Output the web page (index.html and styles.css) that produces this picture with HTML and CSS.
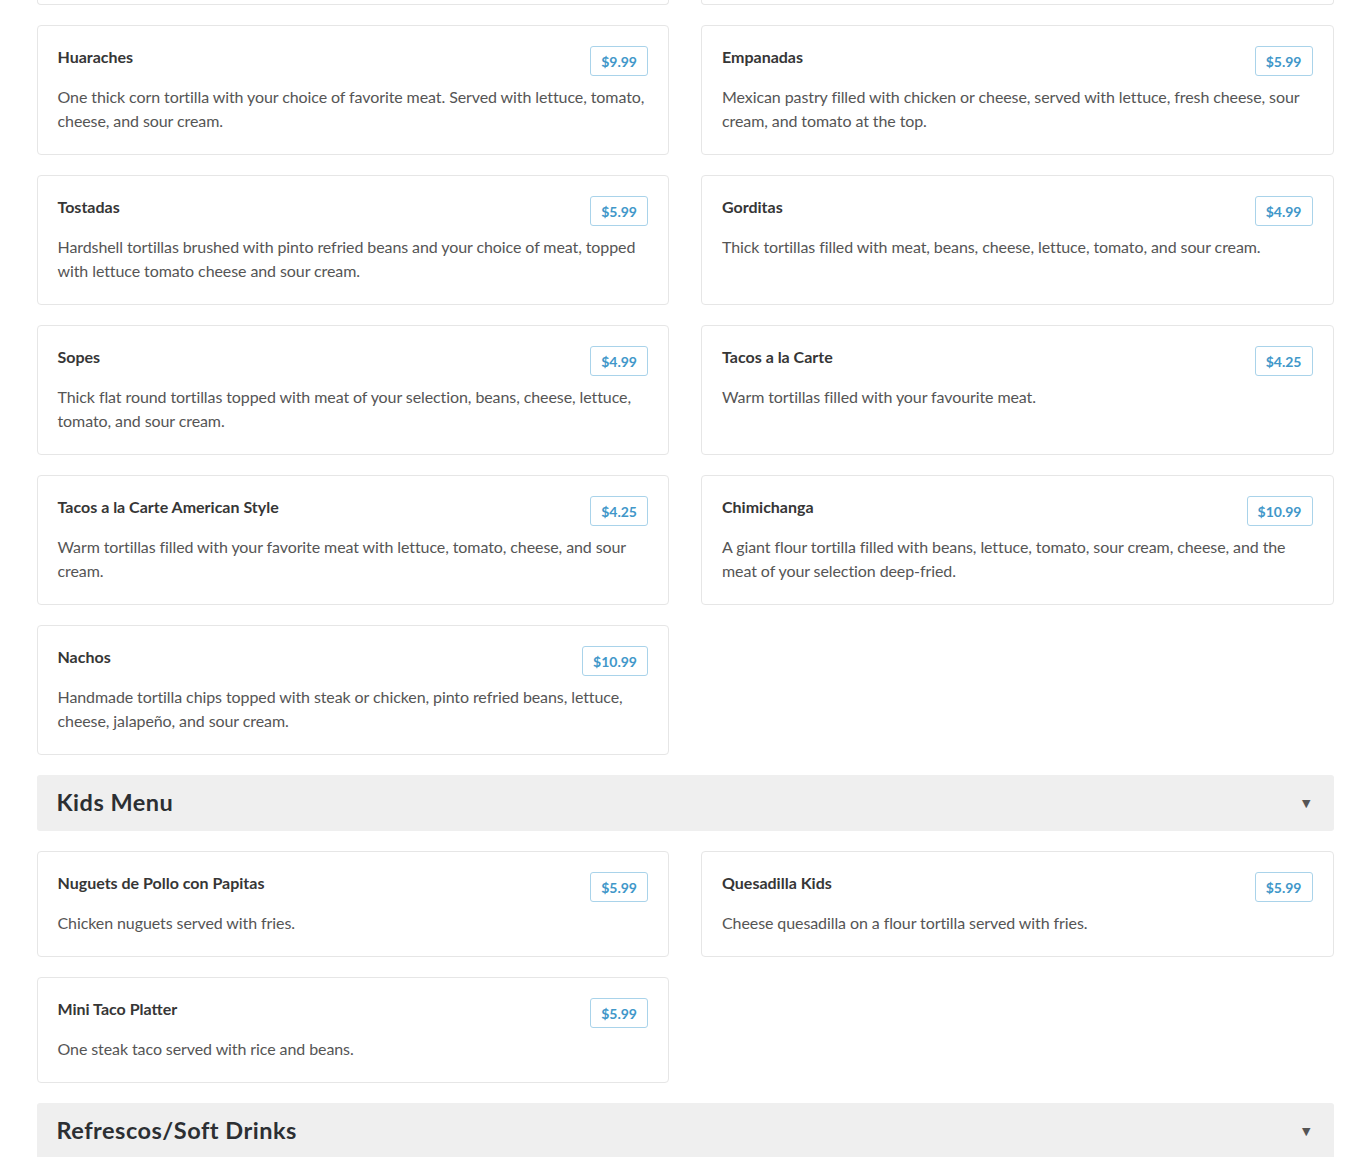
FILE: index.html
```html
<!DOCTYPE html>
<html>
<head>
<meta charset="utf-8">
<link rel="stylesheet" href="styles.css">
</head>
<body>
<div class="menu">
  <div class="grid">
    <div class="stub"></div>
    <div class="stub"></div>
  </div>
  <div class="grid">
    <div class="card">
      <div class="card-head"><h3 class="title">Huaraches</h3><span class="price">$9.99</span></div>
      <p class="desc">One thick corn tortilla with your choice of favorite meat. Served with lettuce, tomato, cheese, and sour cream.</p>
    </div>
    <div class="card">
      <div class="card-head"><h3 class="title">Empanadas</h3><span class="price">$5.99</span></div>
      <p class="desc">Mexican pastry filled with chicken or cheese, served with lettuce, fresh cheese, sour cream, and tomato at the top.</p>
    </div>
    <div class="card">
      <div class="card-head"><h3 class="title">Tostadas</h3><span class="price">$5.99</span></div>
      <p class="desc">Hardshell tortillas brushed with pinto refried beans and your choice of meat, topped with lettuce tomato cheese and sour cream.</p>
    </div>
    <div class="card">
      <div class="card-head"><h3 class="title">Gorditas</h3><span class="price">$4.99</span></div>
      <p class="desc">Thick tortillas filled with meat, beans, cheese, lettuce, tomato, and sour cream.</p>
    </div>
    <div class="card">
      <div class="card-head"><h3 class="title">Sopes</h3><span class="price">$4.99</span></div>
      <p class="desc">Thick flat round tortillas topped with meat of your selection, beans, cheese, lettuce, tomato, and sour cream.</p>
    </div>
    <div class="card">
      <div class="card-head"><h3 class="title">Tacos a la Carte</h3><span class="price">$4.25</span></div>
      <p class="desc">Warm tortillas filled with your favourite meat.</p>
    </div>
    <div class="card">
      <div class="card-head"><h3 class="title">Tacos a la Carte American Style</h3><span class="price">$4.25</span></div>
      <p class="desc">Warm tortillas filled with your favorite meat with lettuce, tomato, cheese, and sour cream.</p>
    </div>
    <div class="card">
      <div class="card-head"><h3 class="title">Chimichanga</h3><span class="price">$10.99</span></div>
      <p class="desc">A giant flour tortilla filled with beans, lettuce, tomato, sour cream, cheese, and the meat of your selection deep-fried.</p>
    </div>
    <div class="card">
      <div class="card-head"><h3 class="title">Nachos</h3><span class="price">$10.99</span></div>
      <p class="desc">Handmade tortilla chips topped with steak or chicken, pinto refried beans, lettuce, cheese, jalapeño, and sour cream.</p>
    </div>
  </div>

  <div class="section-head"><h2>Kids Menu</h2><span class="caret">▼</span></div>
  <div class="grid">
    <div class="card">
      <div class="card-head"><h3 class="title">Nuguets de Pollo con Papitas</h3><span class="price">$5.99</span></div>
      <p class="desc">Chicken nuguets served with fries.</p>
    </div>
    <div class="card">
      <div class="card-head"><h3 class="title">Quesadilla Kids</h3><span class="price">$5.99</span></div>
      <p class="desc">Cheese quesadilla on a flour tortilla served with fries.</p>
    </div>
    <div class="card">
      <div class="card-head"><h3 class="title">Mini Taco Platter</h3><span class="price">$5.99</span></div>
      <p class="desc">One steak taco served with rice and beans.</p>
    </div>
  </div>

  <div class="section-head"><h2>Refrescos/Soft Drinks</h2><span class="caret">▼</span></div>
</div>
</body>
</html>
```
FILE: styles.css
```css
* { box-sizing: border-box; }
html, body { margin: 0; padding: 0; background: #fff; }
body {
  font-family: Lato, "Open Sans", "Liberation Sans", sans-serif;
  color: #555;
  overflow: hidden;
}
.menu {
  width: 1297px;
  margin: 0 auto;
}
.grid {
  display: grid;
  grid-template-columns: 1fr 1fr;
  column-gap: 32px;
  row-gap: 20px;
  margin-bottom: 20px;
}
.stub {
  height: 5px;
  border: 1px solid #e6e6e6;
  border-top: none;
  border-radius: 0 0 4px 4px;
}
.card {
  border: 1px solid #e6e6e6;
  border-radius: 4px;
  padding: 20px 20px 21px;
  background: #fff;
}
.card-head {
  display: flex;
  justify-content: space-between;
  align-items: flex-start;
}
.title {
  margin: 0;
  font-size: 16px;
  line-height: 22px;
  font-weight: 700;
  color: #363636;
}
.price {
  display: inline-flex;
  align-items: center;
  height: 30px;
  padding: 0 10px;
  border: 1px solid #a9d3ea;
  border-radius: 3px;
  font-size: 14px;
  font-weight: 700;
  color: #4197c9;
}
.desc {
  margin: 9px 0 0;
  font-size: 16px;
  line-height: 24px;
  letter-spacing: -0.09px;
  color: #555;
}
.section-head {
  display: flex;
  align-items: center;
  justify-content: space-between;
  height: 56px;
  padding: 0 23px 2px 20px;
  background: #efefef;
  border-radius: 3px;
  margin-bottom: 20px;
}
.section-head h2 {
  margin: 0;
  font-size: 23.5px;
  letter-spacing: 0.5px;
  font-weight: 700;
  color: #2c2f33;
}
.caret {
  font-size: 11px;
  color: #555;
  font-family: "DejaVu Sans", sans-serif;
  margin-top: 2px;
}
```
